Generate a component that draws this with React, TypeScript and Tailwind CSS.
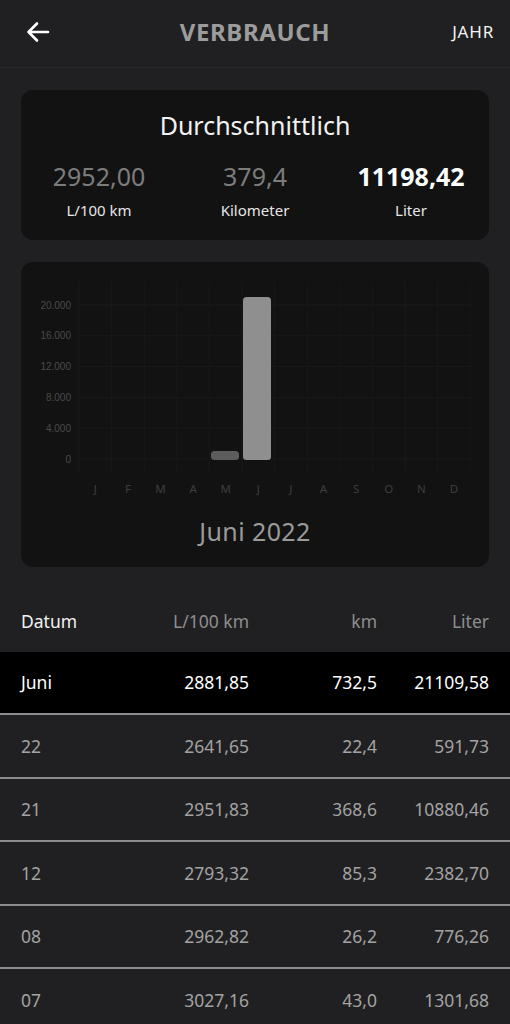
import React from "react";

const months = ["J", "F", "M", "A", "M", "J", "J", "A", "S", "O", "N", "D"];
const yTicks = ["20.000", "16.000", "12.000", "8.000", "4.000", "0"];

const rows = [
  ["22", "2641,65", "22,4", "591,73"],
  ["21", "2951,83", "368,6", "10880,46"],
  ["12", "2793,32", "85,3", "2382,70"],
  ["08", "2962,82", "26,2", "776,26"],
  ["07", "3027,16", "43,0", "1301,68"],
];

function Chart() {
  const x0 = 58;
  const step = 32.6;
  const yTop = 43;
  const yBottom = 197;
  const yStep = (yBottom - yTop) / 5;
  return (
    <svg width="468" height="245" viewBox="0 0 468 245" className="block">
      {yTicks.map((t, i) => {
        const y = yTop + i * yStep;
        return (
          <g key={t}>
            <line x1={x0} x2={452} y1={y} y2={y} stroke="#1b1b1b" strokeWidth="1" />
            <text
              x={50}
              y={y + 3.5}
              textAnchor="end"
              fontSize="10"
              fill="#4a4a4a"
              fontFamily="'Liberation Sans', Arial, sans-serif"
            >
              {t}
            </text>
          </g>
        );
      })}
      {Array.from({ length: 13 }).map((_, i) => (
        <line
          key={i}
          x1={x0 + i * step}
          x2={x0 + i * step}
          y1={20}
          y2={210}
          stroke="#191919"
          strokeWidth="1"
        />
      ))}
      {months.map((m, i) => (
        <text
          key={i}
          x={x0 + step / 2 + i * step}
          y={231}
          textAnchor="middle"
          fontSize="11.5"
          fill="#3e3e3e"
          fontFamily="'Noto Sans', sans-serif"
        >
          {m}
        </text>
      ))}
      <rect x={190} y={189} width={28} height={9} rx={3.5} fill="#5c5c5c" />
      <rect x={222} y={35} width={28} height={163} rx={3.5} fill="#8f8f8f" />
    </svg>
  );
}

const cols = "grid grid-cols-[1fr_128px_128px_112px] items-center px-[21px]";

export default function App() {
  return (
    <div
      className="w-[510px] min-h-[1024px] bg-[#202022] text-white overflow-hidden"
      style={{ fontFamily: "'Noto Sans', 'Open Sans', sans-serif" }}
    >
      {/* Header */}
      <div className="h-[68px] grid grid-cols-[1fr_auto_1fr] items-center px-[24px] border-b border-[#29292b]">
        <div className="flex items-center">
          <svg width="26" height="22" viewBox="0 0 26 22" className="ml-[1px] mt-[-4px]">
            <path
              d="M23 11H3.5M12 2.5L3.5 11L12 19.5"
              fill="none"
              stroke="#ffffff"
              strokeWidth="2.6"
              strokeLinecap="round"
              strokeLinejoin="round"
            />
          </svg>
        </div>
        <div className="text-[24px] font-bold tracking-[0.6px] text-[#9c9c9c] mt-[-4px]">
          VERBRAUCH
        </div>
        <div className="flex justify-end">
          <div className="text-[17px] tracking-[0.8px] text-[#f2f2f2] mt-[-4px] mr-[-8px]">JAHR</div>
        </div>
      </div>

      {/* Summary card */}
      <div className="mx-[21px] mt-[22px] h-[150px] rounded-[12px] bg-[#121212] flex flex-col items-center pt-[19px]">
        <div className="text-[25px] text-[#f2f2f2] leading-[32px]">Durchschnittlich</div>
        <div className="w-full grid grid-cols-3 mt-[18px]">
          <div className="flex flex-col items-center">
            <div className="text-[25px] leading-[34px] text-[#7c7c7c]">2952,00</div>
            <div className="text-[15px] leading-[20px] text-[#e6e6e6] mt-[7px]">L/100 km</div>
          </div>
          <div className="flex flex-col items-center">
            <div className="text-[25px] leading-[34px] text-[#7c7c7c]">379,4</div>
            <div className="text-[15px] leading-[20px] text-[#e6e6e6] mt-[7px]">Kilometer</div>
          </div>
          <div className="flex flex-col items-center">
            <div className="text-[25px] leading-[34px] font-bold text-white">11198,42</div>
            <div className="text-[15px] leading-[20px] text-[#e6e6e6] mt-[7px]">Liter</div>
          </div>
        </div>
      </div>

      {/* Chart card */}
      <div className="mx-[21px] mt-[22px] h-[305px] rounded-[12px] bg-[#121212] flex flex-col items-center">
        <Chart />
        <div className="text-[25px] leading-[32px] text-[#9a9a9a] mt-[8px] tracking-[0.4px]">Juni 2022</div>
      </div>

      {/* Table */}
      <div className="mt-[23px] text-[17.5px]">
        <div className={`h-[62px] ${cols}`}>
          <div className="text-[#f2f2f2]">Datum</div>
          <div className="text-right text-[#8e8e8e] ml-[-60px]">L/100 km</div>
          <div className="text-right text-[#8e8e8e]">km</div>
          <div className="text-right text-[#8e8e8e]">Liter</div>
        </div>
        <div className={`h-[63px] bg-black text-white border-b-2 border-[#8c8c8c] ${cols}`}>
          <div>Juni</div>
          <div className="text-right">2881,85</div>
          <div className="text-right">732,5</div>
          <div className="text-right">21109,58</div>
        </div>
        {rows.map((r) => (
          <div
            key={r[0]}
            className={`h-[63.5px] text-[#a3a3a3] border-b-2 border-[#8c8c8c] ${cols}`}
          >
            <div>{r[0]}</div>
            <div className="text-right">{r[1]}</div>
            <div className="text-right">{r[2]}</div>
            <div className="text-right">{r[3]}</div>
          </div>
        ))}
      </div>
    </div>
  );
}
